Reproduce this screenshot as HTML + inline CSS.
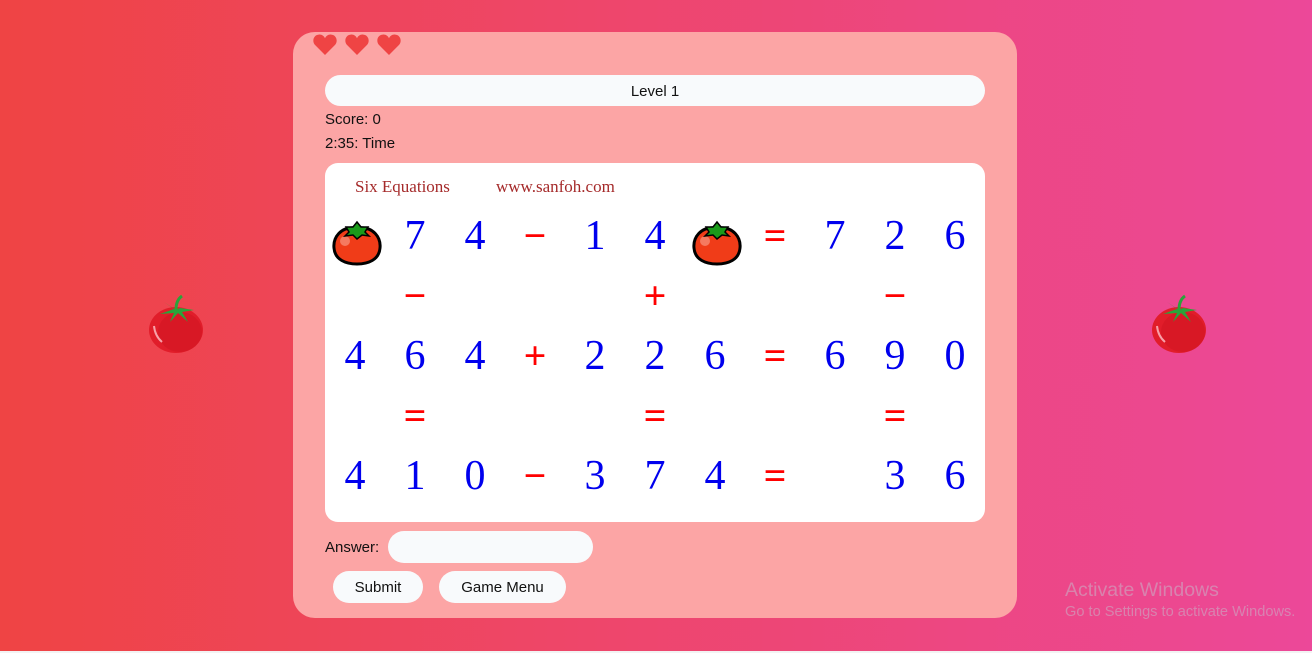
<!DOCTYPE html>
<html><head><meta charset="utf-8"><style>
*{margin:0;padding:0;box-sizing:border-box}
html,body{width:1312px;height:653px;overflow:hidden}
body{background:linear-gradient(90deg,#ef4444,#ec4899);font-family:"Segoe UI","Liberation Sans",sans-serif;position:relative;color:#111}
.card{position:absolute;left:293px;top:32px;width:724px;height:586px;background:#fca5a5;border-radius:22px}
.hearts{position:absolute;left:312px;top:33px;display:flex;gap:6px}
.bar{position:absolute;left:325px;top:75px;width:660px;height:31px;background:#f8fafc;border-radius:16px;text-align:center;line-height:33px;font-size:15px}
.t{position:absolute;left:325px;font-size:15px}
.board{position:absolute;left:325px;top:163px;width:660px;height:359px;background:#fff;border-radius:13px}
.hd{position:absolute;top:177px;font-family:"Liberation Serif",serif;color:#a52a2a;font-size:17px}
.c{position:absolute;width:60px;height:60px;line-height:60px;text-align:center;font-family:"Liberation Serif",serif;font-size:42px;color:#0000ee}
.o{color:#f00;font-weight:bold;font-size:40px}
.ans{position:absolute;left:388px;top:531px;width:205px;height:32px;background:#f8fafc;border-radius:16px}
.btn{position:absolute;top:571px;height:32px;background:#f8fafc;border-radius:16px;text-align:center;line-height:34px;font-size:15px}
.win{position:absolute;left:1065px;color:rgba(200,180,200,.55)}
</style></head><body>
<div class="card"></div>
<div class="hearts">
<svg width="26" height="23" viewBox="0 0 24 22"><path d="M12 21 L2.5 11.5 C-0.5 8.5 0.5 2 6 1.5 C9 1.2 11 3 12 5 C13 3 15 1.2 18 1.5 C23.5 2 24.5 8.5 21.5 11.5 Z" fill="#ef4444"/></svg>
<svg width="26" height="23" viewBox="0 0 24 22"><path d="M12 21 L2.5 11.5 C-0.5 8.5 0.5 2 6 1.5 C9 1.2 11 3 12 5 C13 3 15 1.2 18 1.5 C23.5 2 24.5 8.5 21.5 11.5 Z" fill="#ef4444"/></svg>
<svg width="26" height="23" viewBox="0 0 24 22"><path d="M12 21 L2.5 11.5 C-0.5 8.5 0.5 2 6 1.5 C9 1.2 11 3 12 5 C13 3 15 1.2 18 1.5 C23.5 2 24.5 8.5 21.5 11.5 Z" fill="#ef4444"/></svg>
</div>
<div class="bar">Level 1</div>
<div class="t" style="top:111px">Score: 0</div>
<div class="t" style="top:135px">2:35: Time</div>
<div class="board"></div>
<div class="hd" style="left:355px">Six Equations</div>
<div class="hd" style="left:496px">www.sanfoh.com</div>

<svg style="position:absolute;left:332px;top:220px" width="50" height="46" viewBox="0 0 50 46"><path d="M25 8 C8 6 1 18 2 28 C3 40 14 44 25 44 C36 44 47 40 48 28 C49 18 42 6 25 8Z" fill="#f03c18" stroke="#000" stroke-width="3"/><circle cx="13" cy="21" r="5" fill="#f57a60"/><path d="M25 2 L29 7 L36 7 L33 12 L37 16 L30 15 L25 19 L21 15 L13 16 L17 12 L14 7 L21 7Z" fill="#1a9a1a" stroke="#000" stroke-width="1.5"/></svg>
<div class="c" style="left:385px;top:206px">7</div>
<div class="c" style="left:445px;top:206px">4</div>
<div class="c o" style="left:505px;top:206px">−</div>
<div class="c" style="left:565px;top:206px">1</div>
<div class="c" style="left:625px;top:206px">4</div>
<svg style="position:absolute;left:692px;top:220px" width="50" height="46" viewBox="0 0 50 46"><path d="M25 8 C8 6 1 18 2 28 C3 40 14 44 25 44 C36 44 47 40 48 28 C49 18 42 6 25 8Z" fill="#f03c18" stroke="#000" stroke-width="3"/><circle cx="13" cy="21" r="5" fill="#f57a60"/><path d="M25 2 L29 7 L36 7 L33 12 L37 16 L30 15 L25 19 L21 15 L13 16 L17 12 L14 7 L21 7Z" fill="#1a9a1a" stroke="#000" stroke-width="1.5"/></svg>
<div class="c o" style="left:745px;top:206px">=</div>
<div class="c" style="left:805px;top:206px">7</div>
<div class="c" style="left:865px;top:206px">2</div>
<div class="c" style="left:925px;top:206px">6</div>

<div class="c o" style="left:385px;top:266px">−</div>
<div class="c o" style="left:625px;top:266px">+</div>
<div class="c o" style="left:865px;top:266px">−</div>

<div class="c" style="left:325px;top:326px">4</div>
<div class="c" style="left:385px;top:326px">6</div>
<div class="c" style="left:445px;top:326px">4</div>
<div class="c o" style="left:505px;top:326px">+</div>
<div class="c" style="left:565px;top:326px">2</div>
<div class="c" style="left:625px;top:326px">2</div>
<div class="c" style="left:685px;top:326px">6</div>
<div class="c o" style="left:745px;top:326px">=</div>
<div class="c" style="left:805px;top:326px">6</div>
<div class="c" style="left:865px;top:326px">9</div>
<div class="c" style="left:925px;top:326px">0</div>

<div class="c o" style="left:385px;top:386px">=</div>
<div class="c o" style="left:625px;top:386px">=</div>
<div class="c o" style="left:865px;top:386px">=</div>

<div class="c" style="left:325px;top:446px">4</div>
<div class="c" style="left:385px;top:446px">1</div>
<div class="c" style="left:445px;top:446px">0</div>
<div class="c o" style="left:505px;top:446px">−</div>
<div class="c" style="left:565px;top:446px">3</div>
<div class="c" style="left:625px;top:446px">7</div>
<div class="c" style="left:685px;top:446px">4</div>
<div class="c o" style="left:745px;top:446px">=</div>
<div class="c" style="left:865px;top:446px">3</div>
<div class="c" style="left:925px;top:446px">6</div>

<div class="t" style="top:539px">Answer:</div>
<div class="ans"></div>
<div class="btn" style="left:333px;width:90px">Submit</div>
<div class="btn" style="left:439px;width:127px">Game Menu</div>

<svg style="position:absolute;left:146px;top:294px" width="60" height="60" viewBox="0 0 60 60"><ellipse cx="30" cy="36" rx="27" ry="23" fill="#e11d2a"/><ellipse cx="34" cy="38" rx="22" ry="20" fill="#d0141f" opacity=".5"/><path d="M8 32 Q9 42 16 48" stroke="#f8a0a8" stroke-width="2" fill="none"/><path d="M30 16 L18 8 L28 15 L14 20 L28 19 L24 28 L32 19 L42 28 L36 18 L48 16 L34 14 Z" fill="#2aa33a"/><path d="M30 16 Q30 6 36 2" stroke="#2aa33a" stroke-width="3" fill="none"/></svg>
<svg style="position:absolute;left:1149px;top:294px" width="60" height="60" viewBox="0 0 60 60"><ellipse cx="30" cy="36" rx="27" ry="23" fill="#e11d2a"/><ellipse cx="34" cy="38" rx="22" ry="20" fill="#d0141f" opacity=".5"/><path d="M8 32 Q9 42 16 48" stroke="#f8a0a8" stroke-width="2" fill="none"/><path d="M30 16 L18 8 L28 15 L14 20 L28 19 L24 28 L32 19 L42 28 L36 18 L48 16 L34 14 Z" fill="#2aa33a"/><path d="M30 16 Q30 6 36 2" stroke="#2aa33a" stroke-width="3" fill="none"/></svg>

<div class="win" style="top:579px;font-size:19.5px">Activate Windows</div>
<div class="win" style="top:604px;font-size:14.6px">Go to Settings to activate Windows.</div>
<div style="position:absolute;left:0;top:651px;width:1312px;height:2px;background:#f3f3f3"></div>
</body></html>
